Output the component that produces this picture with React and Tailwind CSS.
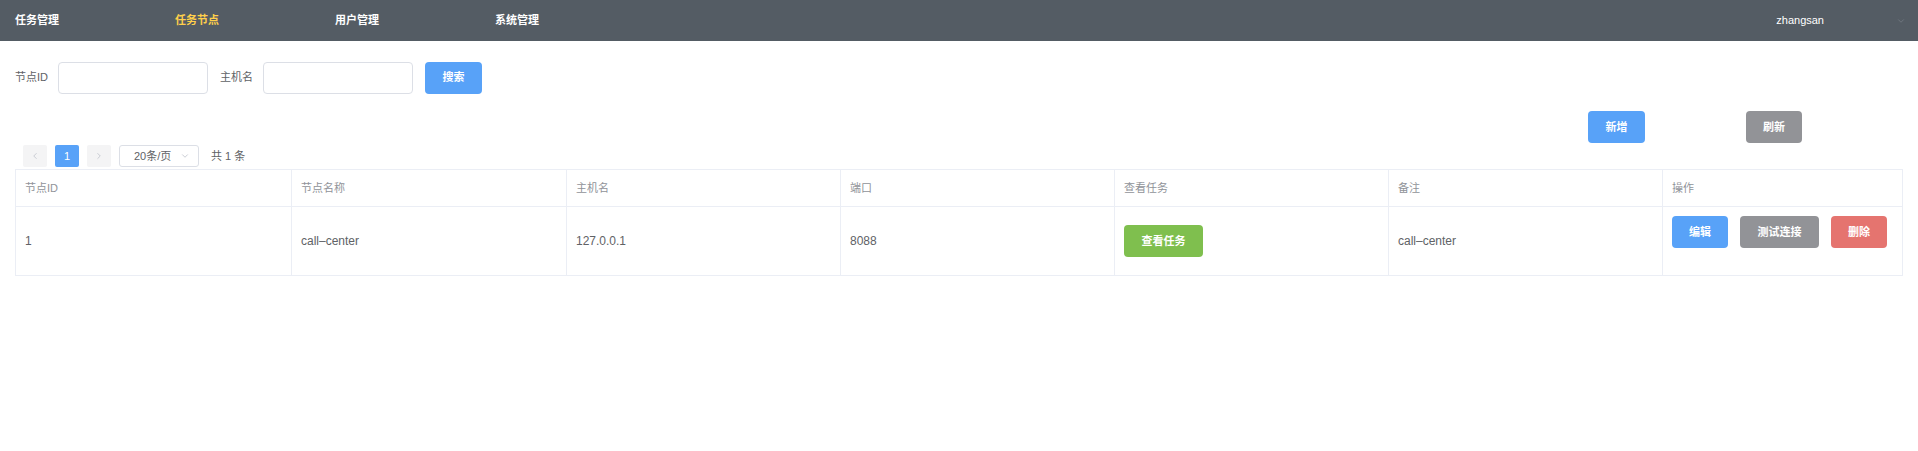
import { ChevronDown, ChevronLeft, ChevronRight } from 'lucide-react';

const font = { fontFamily: '"Liberation Sans", "Noto Sans CJK SC", sans-serif' };

const menus = ['任务管理', '任务节点', '用户管理', '系统管理'];

const columns = ['节点ID', '节点名称', '主机名', '端口', '查看任务', '备注', '操作'];

const rows = [
  { id: 1, name: 'call–center', host: '127.0.0.1', port: '8088', remark: 'call–center' },
];

const Btn = ({ color, w, children }) => (
  <button
    className={`h-[32px] ${w} ${color} rounded-[4px] text-white text-[11px] font-bold flex items-center justify-center shrink-0`}
  >
    {children}
  </button>
);

const App = () => {
  return (
    <div className="w-[1918px] h-[451px] bg-white text-[#606266]" style={font}>
      {/* top nav */}
      <header className="h-[41px] bg-[#545c64] flex items-center pl-[15px]">
        {menus.map((m, i) => (
          <div
            key={m}
            className={`w-[160px] text-[11px] font-bold ${i === 1 ? 'text-[#ffd04b]' : 'text-white'}`}
          >
            {m}
          </div>
        ))}
        <div className="ml-auto flex items-center">
          <span className="text-[11px] text-white">zhangsan</span>
          <ChevronDown className="ml-[72px] mr-[12px] text-[#7d848b]" size={10} strokeWidth={1.5} />
        </div>
      </header>

      <div className="px-[15px]">
        {/* search */}
        <div className="flex items-center h-[33px] mt-[20px]">
          <label className="text-[11px] text-[#606266]">节点ID</label>
          <input className="ml-[10px] w-[150px] h-[32px] border border-[#dcdfe6] rounded-[4px] outline-none" />
          <label className="ml-[12px] text-[11px] text-[#606266]">主机名</label>
          <input className="ml-[10px] w-[150px] h-[32px] border border-[#dcdfe6] rounded-[4px] outline-none" />
          <div className="ml-[12px]">
            <Btn color="bg-[#58a2f8]" w="w-[57px]">搜索</Btn>
          </div>
        </div>

        {/* actions */}
        <div className="flex justify-end gap-[101px] pr-[101px] mt-[17px]">
          <Btn color="bg-[#58a2f8]" w="w-[57px]">新增</Btn>
          <Btn color="bg-[#929397]" w="w-[56px]">刷新</Btn>
        </div>

        {/* pagination */}
        <div className="flex items-center h-[22px] mt-[2px] pl-[8px] text-[11px]">
          <div className="w-[24px] h-[22px] bg-[#f4f4f5] rounded-[2px] flex items-center justify-center">
            <ChevronLeft size={10} className="text-[#c0c4cc]" />
          </div>
          <div className="ml-[8px] w-[24px] h-[22px] bg-[#58a2f8] rounded-[2px] flex items-center justify-center text-white">
            1
          </div>
          <div className="ml-[8px] w-[24px] h-[22px] bg-[#f4f4f5] rounded-[2px] flex items-center justify-center">
            <ChevronRight size={10} className="text-[#c0c4cc]" />
          </div>
          <div className="ml-[8px] w-[80px] h-[22px] border border-[#dcdfe6] rounded-[3px] flex items-center pl-[14px] pr-[8px] text-[#606266]">
            <span>20条/页</span>
            <ChevronDown size={10} className="ml-auto text-[#c0c4cc]" />
          </div>
          <span className="ml-[12px] text-[#606266]">共 1 条</span>
        </div>

        {/* table */}
        <div className="mt-[2px] border border-[#ebeef5]">
          <div className="grid grid-cols-[276px_275px_274px_274px_274px_274px_1fr] h-[37px] border-b border-[#ebeef5]">
            {columns.map((c, i) => (
              <div
                key={c}
                className={`flex items-center pl-[9px] text-[11px] text-[#909399] ${i < 6 ? 'border-r border-[#ebeef5]' : ''}`}
              >
                {c}
              </div>
            ))}
          </div>
          {rows.map(r => (
            <div key={r.id} className="grid grid-cols-[276px_275px_274px_274px_274px_274px_1fr] h-[68px] text-[12px] text-[#606266]">
              <div className="flex items-center pl-[9px] border-r border-[#ebeef5]">{r.id}</div>
              <div className="flex items-center pl-[9px] border-r border-[#ebeef5]">{r.name}</div>
              <div className="flex items-center pl-[9px] border-r border-[#ebeef5]">{r.host}</div>
              <div className="flex items-center pl-[9px] border-r border-[#ebeef5]">{r.port}</div>
              <div className="flex items-center pl-[9px] border-r border-[#ebeef5]">
                <Btn color="bg-[#7fbf4e]" w="w-[79px]">查看任务</Btn>
              </div>
              <div className="flex items-center pl-[9px] border-r border-[#ebeef5]">{r.remark}</div>
              <div className="flex items-start pt-[9px] pl-[9px] gap-[12px]">
                <Btn color="bg-[#58a2f8]" w="w-[56px]">编辑</Btn>
                <Btn color="bg-[#929397]" w="w-[79px]">测试连接</Btn>
                <Btn color="bg-[#e5746f]" w="w-[56px]">删除</Btn>
              </div>
            </div>
          ))}
        </div>
      </div>
    </div>
  );
};

export default App;
